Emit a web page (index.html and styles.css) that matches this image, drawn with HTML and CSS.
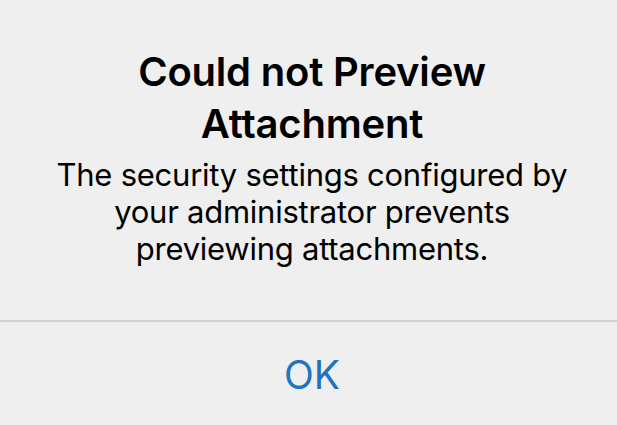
FILE: index.html
```html
<!DOCTYPE html>
<html>
<head>
	<meta charset="utf-8"/>
	<title>Could not Preview Attachment</title>
	<meta name="viewport" content="width=device-width,initial-scale=1">
	<link rel="stylesheet" href="styles.css">
</head>
<body>
	<div class="alert">
		<div class="content">
			<div class="title">Could not Preview<br>Attachment</div>
			<div class="message">The security settings configured by<br>your administrator prevents<br>previewing attachments.</div>
		</div>
		<div class="actions">
			<button class="ok">OK</button>
		</div>
	</div>
</body>
</html>
```

FILE: styles.css
```css
html, body{height: 100%;}
body{margin: 0;background-color: #efefef;font-family: Inter, "Noto Sans", sans-serif;}
.alert{height: 100%;display: flex;flex-direction: column;background-color: #efefef;border-radius: 14px;}
.content{height: 320px;box-sizing: border-box;padding: 46px 0 0 7px;text-align: center;color: #000;}
.title{font-size: 40px;line-height: 52px;font-weight: 600;letter-spacing: -0.2px;}
.message{font-size: 31px;line-height: 37px;margin-top: 6px;letter-spacing: -0.25px;}
.actions{flex: 1;display: flex;align-items: center;justify-content: center;padding-left: 7px;border-top: 2px solid #d3d3d3;}
.ok{border: none;background: none;font-family: inherit;font-size: 39px;color: #2272c3;padding: 0;margin-top: 2px;}
```
